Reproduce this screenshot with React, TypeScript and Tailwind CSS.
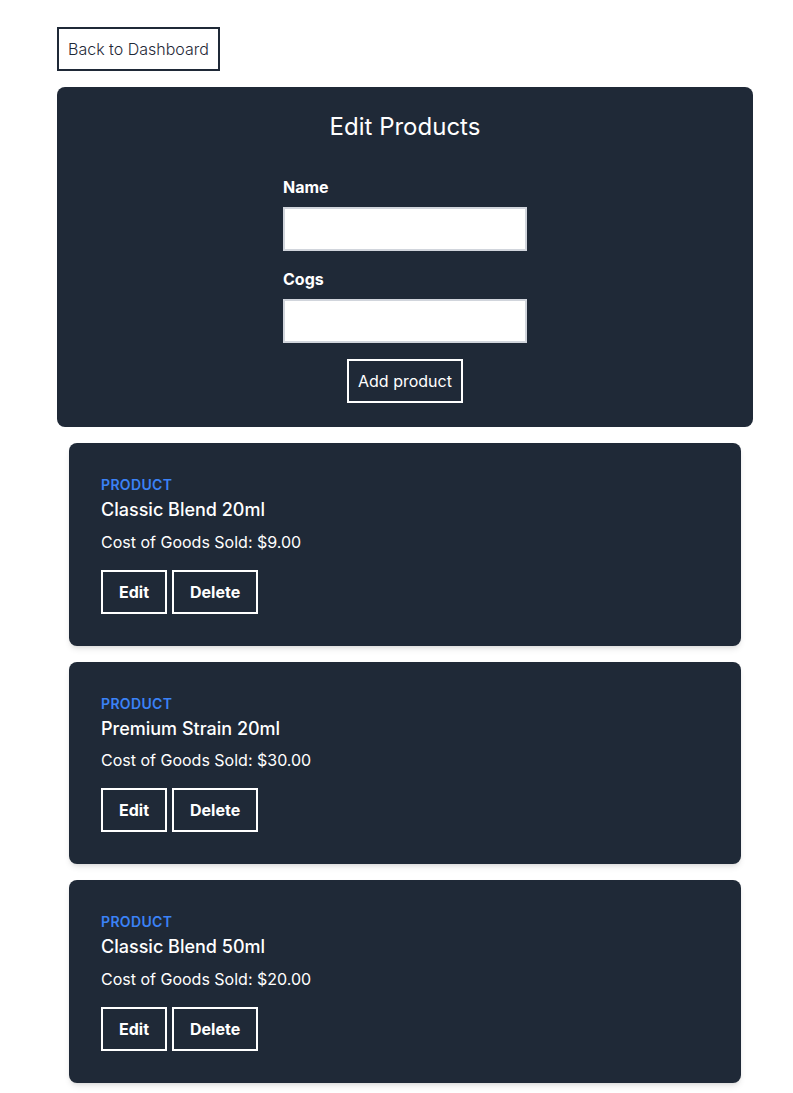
const products = [
  { name: 'Classic Blend 20ml', cogs: '9.00' },
  { name: 'Premium Strain 20ml', cogs: '30.00' },
  { name: 'Classic Blend 50ml', cogs: '20.00' },
];

function Field({ id, label }: { id: string; label: string }) {
  return (
    <div className="mb-4 flex w-full flex-col">
      <label htmlFor={id} className="mb-2 font-bold">{label}</label>
      <input id={id} type="text" className="h-11 w-full border-2 border-gray-300 bg-white px-2 text-gray-800" />
    </div>
  );
}

function ProductCard({ name, cogs }: { name: string; cogs: string }) {
  return (
    <article className="rounded-lg bg-[#1f2937] p-8 text-white shadow-md">
      <p className="text-sm font-semibold tracking-wide text-[#3b82f6] uppercase">Product</p>
      <h2 className="mt-1 text-lg leading-tight font-medium">{name}</h2>
      <p className="mt-2">Cost of Goods Sold: ${cogs}</p>
      <div className="mt-4 flex gap-[5px]">
        <button type="button" className="h-11 border-2 border-white px-4 font-bold">Edit</button>
        <button type="button" className="h-11 border-2 border-white px-4 font-bold">Delete</button>
      </div>
    </article>
  );
}

export default function App() {
  return (
    <main className="bg-white py-[27px] pr-10 pl-[57px] font-['Inter',sans-serif] text-base">
      <a href="#dashboard" className="inline-flex h-11 items-center border-2 border-[#1f2937] px-[9px] font-light text-[#1f2937]">
        Back to Dashboard
      </a>
      <section className="mt-4 flex flex-col items-center rounded-lg bg-[#1f2937] p-6 text-white">
        <h1 className="mb-8 text-2xl">Edit Products</h1>
        <form className="flex w-61 flex-col items-center">
          <Field id="name" label="Name" />
          <Field id="cogs" label="Cogs" />
          <button type="button" className="h-11 border-2 border-white px-[9px]">Add product</button>
        </form>
      </section>
      <div className="mx-3 mt-4 flex flex-col gap-4">
        {products.map((product) => (
          <ProductCard key={product.name} {...product} />
        ))}
      </div>
    </main>
  );
}
